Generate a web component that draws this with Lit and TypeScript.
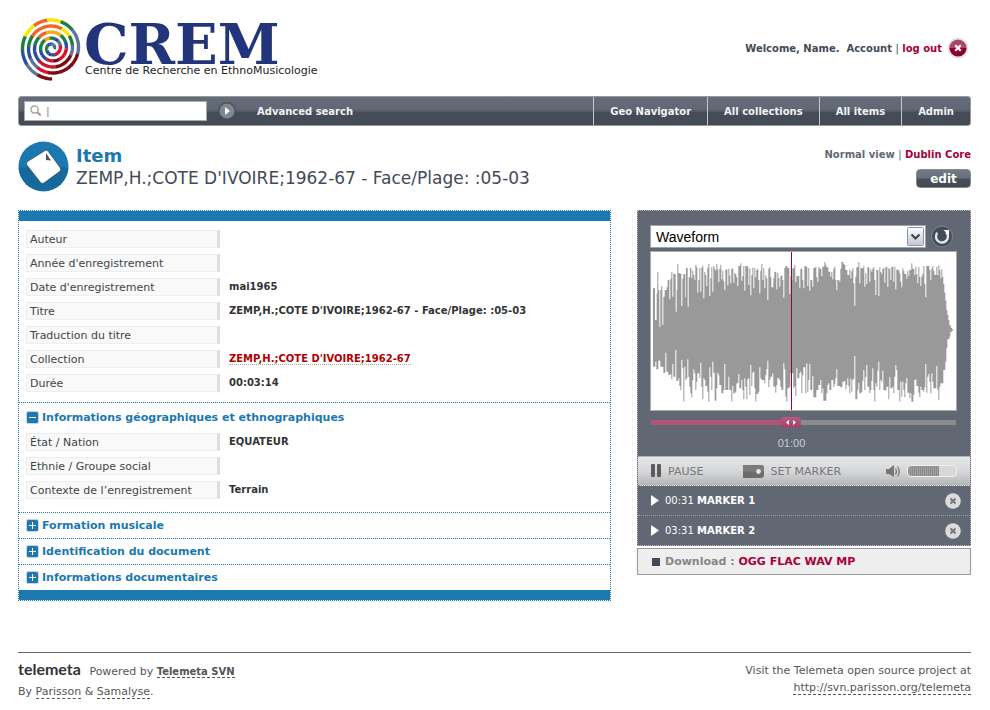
import { LitElement, html, svg, css } from "lit";
import { customElement, property, state } from "lit/decorators.js";

/* Upper and lower outlines of the sound: x, y pairs in thirds of a pixel. */
const UPPER = [
  69,265,75,360,80,280,82,216,85,270,88,380,91,270,94,258,97,375,100,290,104,270,110,262,113,240,118,297,121,236,124,216,127,290,130,222,137,335,140,270,142,192,145,220,152,222,154,318,157,236,160,222,166,292,168,204,173,320,176,232,180,204,184,235,187,212,190,225,193,240,196,195,199,202,202,278,205,240,208,204,211,275,214,204,217,198,220,295,223,216,226,225,229,258,232,204,235,192,238,288,241,235,244,200,247,275,250,198,253,206,256,212,259,192,262,208,265,246,268,206,271,194,274,238,277,212,280,244,283,270,286,210,289,208,292,256,295,206,298,226,301,250,304,206,307,206,310,248,313,220,316,222,319,232,322,258,325,198,331,190,334,242,337,228,340,198,343,272,346,198,352,200,355,255,358,205,361,286,364,226,367,203,370,265,373,204,376,232,379,210,382,206,385,240,388,280,391,212,394,192,397,240,400,205,403,265,406,226,409,235,412,300,415,206,418,202,421,232,424,262,430,235,433,216,439,268,442,218,445,234,448,260,451,228,454,226,457,240,460,293,463,204,466,198,472,204,478,282,481,228,484,240,487,205,493,195,496,246,499,228,502,228,508,265,511,208,514,205,517,240,520,265,523,198,529,202,532,258,535,204,538,272,541,240,547,260,550,204,556,200,559,232,562,245,565,200,568,206,574,228,577,200,583,186,586,194,589,202,595,215,601,230,604,215,607,238,610,206,613,200,616,240,619,270,622,240,628,245,631,206,634,186,640,192,643,195,646,210,652,225,658,208,661,235,664,214,667,205,670,250,673,318,676,230,679,202,685,186,688,250,691,204,694,205,700,198,703,260,706,220,709,252,712,202,718,245,721,208,724,215,727,206,730,202,733,240,736,285,739,210,745,288,748,202,751,216,754,222,757,206,760,204,763,248,766,202,769,200,772,260,775,204,778,208,781,240,784,200,790,245,793,200,796,268,799,208,802,210,808,220,811,245,814,262,817,205,820,212,823,222,829,236,832,212,835,228,838,210,844,190,847,206,853,225,856,200,859,222,862,250,865,200,868,230,871,258,874,230,877,222,880,198,883,252,886,292,889,198,898,210,901,240,904,206,907,198,910,212,913,225,919,200,922,226,925,196,928,210,931,235,934,208,937,230,940,252,943,278,946,302,949,330,952,345,955,360,958,375,962,383,966,388,
];
const LOWER = [
  69,170,76,155,79,178,85,152,91,170,100,188,106,128,109,185,115,195,121,192,124,208,127,162,130,200,136,120,139,212,145,205,148,228,151,240,154,150,157,175,160,275,163,170,166,210,169,205,172,148,175,200,178,230,181,250,184,262,187,210,190,178,193,190,196,240,199,215,202,190,208,204,211,158,214,230,217,268,220,205,223,210,226,228,232,245,235,275,238,172,241,200,244,240,247,155,250,188,254,272,259,235,262,188,265,196,268,225,274,250,280,240,283,162,286,240,292,240,295,200,298,240,304,275,307,228,310,250,316,245,319,220,325,192,328,235,334,210,337,240,340,268,343,205,346,230,349,268,352,208,355,205,358,255,361,165,364,228,367,188,370,185,373,235,376,275,379,252,385,245,388,172,391,205,394,210,403,220,406,195,409,178,412,152,415,232,418,210,421,200,427,190,430,230,436,248,439,225,442,205,448,210,451,230,454,240,460,160,463,178,466,260,469,275,472,235,478,230,481,190,484,190,490,235,493,228,496,258,499,175,502,205,505,205,508,190,511,185,514,250,517,196,520,172,526,250,529,160,532,245,535,210,538,162,541,240,547,198,550,262,556,262,559,240,565,225,571,210,574,250,577,235,580,272,586,272,589,250,592,225,595,220,598,240,604,210,607,210,610,232,613,222,616,205,619,178,622,228,631,232,637,215,643,212,646,238,649,225,652,205,655,228,658,250,661,206,664,245,667,210,670,206,673,138,676,268,682,240,685,218,688,250,694,245,697,212,700,180,703,240,706,200,709,165,712,230,718,250,721,240,724,212,727,175,730,240,733,275,736,220,739,230,742,182,745,155,748,240,751,210,754,215,757,182,760,240,766,242,769,230,775,268,778,202,781,235,787,230,790,250,793,200,796,165,799,180,802,240,808,275,811,215,814,260,817,215,820,240,823,262,826,220,829,205,832,248,838,265,841,250,844,275,850,255,853,210,856,208,859,228,865,248,868,262,871,230,874,240,880,245,883,232,886,162,889,248,892,200,895,192,898,215,901,250,904,190,907,215,910,235,916,235,919,168,922,240,925,270,928,230,931,220,937,220,940,180,946,155,949,115,952,88,958,80,961,65,966,62,
];

function outline(): string {
  const step = (pairs: number[], dy: number) => {
    const out: string[] = [];
    for (let i = 0; i < pairs.length; i += 2) {
      const x = pairs[i] - 63;
      const next = i + 2 < pairs.length ? pairs[i + 2] - 63 : x + 3;
      out.push(`${x},${pairs[i + 1] + dy}`, `${next},${pairs[i + 1] + dy}`);
    }
    return out;
  };
  return [...step(UPPER, -156), ...step(LOWER, 174).reverse()].join(" ");
}

/* Colours met along the spiral, twelve to a turn, clockwise from six o'clock, outer turn first. */
const [R, D, S, B, G, Y, O, A] = ["#d0152c", "#7c0c14", "#5d749c", "#2a4f9c", "#1d7f3c", "#f6ea00", "#f0642a", "#f8a81c"];
const SPIRAL = [
  D, S, B, G, Y, O, Y, G, S, S, D, D, D,
  R, S, B, G, O, O, O, Y, G, S, D, D, R,
  R, B, B, G, O, A, A, G, B, R, R, D,
  R, B, B, G, G, A, G, B, S, R, R, R,
  B, B, B, G, G, B, B, S, S, B, B,
];

function spiral() {
  const turns = 4.8;
  const count = SPIRAL.length;
  const at = (t: number) => {
    const a = Math.PI / 2 + t * turns * 2 * Math.PI;
    const r = 31 - 29 * t;
    return `${(32 + r * Math.cos(a)).toFixed(2)},${(38 + r * Math.sin(a)).toFixed(2)}`;
  };
  return SPIRAL.map((colour, i) => {
    const pts: string[] = [];
    for (let k = 0; k <= 8; k++) pts.push(at((i + (k * 1.04) / 8) / count));
    return svg`<polyline points=${pts.join(" ")} fill="none" stroke=${colour} stroke-width="3.4"/>`;
  });
}

interface Field { label: string; value?: string; href?: string }

const GENERAL: Field[] = [
  { label: "Auteur" },
  { label: "Année d'enregistrement" },
  { label: "Date d'enregistrement", value: "mai1965" },
  { label: "Titre", value: "ZEMP,H.;COTE D'IVOIRE;1962-67 - Face/Plage: :05-03" },
  { label: "Traduction du titre" },
  { label: "Collection", value: "ZEMP,H.;COTE D'IVOIRE;1962-67", href: "#collection" },
  { label: "Durée", value: "00:03:14" },
];

const SECTIONS: { title: string; fields: Field[] }[] = [
  {
    title: "Informations géographiques et ethnographiques",
    fields: [
      { label: "État / Nation", value: "EQUATEUR" },
      { label: "Ethnie / Groupe social" },
      { label: "Contexte de l’enregistrement", value: "Terrain" },
    ],
  },
  { title: "Formation musicale", fields: [] },
  { title: "Identification du document", fields: [] },
  { title: "Informations documentaires", fields: [] },
];

const reset = css`
  * { box-sizing: border-box; margin: 0; padding: 0; }
  :host { display: block; }
  svg { display: block; flex: none; }
  a { text-decoration: none; color: inherit; }
  button { font: inherit; color: inherit; background: none; border: 0; cursor: pointer; }
`;

@customElement("site-header")
class SiteHeader extends LitElement {
  static styles = [reset, css`
    .top { display: flex; justify-content: space-between; align-items: flex-start; height: 86px; }
    .logo { display: block; margin-left: 2px; }
    .name { font: bold 56px "DejaVu Serif", serif; fill: #22357a; }
    .motto { font: 11px "DejaVu Sans", sans-serif; fill: #222; }
    .account { display: flex; align-items: center; font-weight: bold; margin-top: 27px; }
    .account p { white-space: pre; }
    .bar { font-weight: normal; }
    .accent { color: #a8003b; }
    .close { margin: 0 2px 0 5px; }
    nav {
      display: flex; align-items: center; height: 30px; color: #f2f2f2; font-weight: bold;
      border: 1px solid #999; border-radius: 3px;
      background: linear-gradient(#656c79, #616773 48%, #545b67 48%, #545b67 52%, #464c58 52%, #434955);
    }
    form { display: flex; align-items: center; }
    .box {
      display: flex; align-items: center; width: 183px; height: 20px; margin-left: 5px; padding-left: 5px;
      background: #fff; border: 1px solid #aaa;
    }
    .box input { flex: 1; min-width: 0; margin-left: 4px; border: 0; outline: 0; background: none; font: inherit; color: #999; }
    .go { margin: 0 21px 0 11px; }
    .links { display: flex; margin-left: auto; list-style: none; align-self: stretch; }
    .links a { display: flex; align-items: center; height: 28px; padding: 0 16px; border-left: 1px solid #c8c8c8; }
  `];

  render() {
    return html`
      <header>
        <div class="top">
          <a class="logo" href="#home">
            <svg width="320" height="76" viewBox="0 0 320 76" role="img" aria-label="CREM">
              ${spiral()}
              <text class="name" x="64" y="54">CREM</text>
              <text class="motto" x="65" y="64">Centre de Recherche en EthnoMusicologie</text>
            </svg>
          </a>
          <div class="account">
            <p>Welcome, Name.  <a href="#account">Account</a> <span class="bar">|</span> <a class="accent" href="#logout">log out</a></p>
            <svg class="close" width="22" height="22" viewBox="0 0 22 22">
              <defs><linearGradient id="r" x2="0" y2="1"><stop offset=".5" stop-color="#ad4565"/><stop offset=".5" stop-color="#8c0030"/></linearGradient></defs>
              <circle cx="11" cy="11" r="10.5" fill="#e4e4e4"/><circle cx="11" cy="11" r="8.6" fill="url(#r)"/>
              <path d="M8.2 8.2l5.6 5.6M13.8 8.2l-5.6 5.6" stroke="#fff" stroke-width="2.2"/>
            </svg>
          </div>
        </div>
        <nav>
          <form @submit=${(e: Event) => e.preventDefault()}>
            <label class="box">
              <svg width="12" height="12" viewBox="0 0 12 12" fill="none" stroke="#999"><circle cx="4.5" cy="4.5" r="3.6" stroke-width="1.2"/><path d="M7.2 7.2l3.6 3.4" stroke-width="2"/></svg>
              <input type="text" aria-label="Search" value="|">
            </label>
            <button class="go" aria-label="Search">
              <svg width="18" height="18" viewBox="0 0 18 18"><circle cx="9" cy="9" r="8.2" fill="#7f898d" stroke="#4a505b" stroke-width="1.5"/><path d="M7 5l5 4-5 4z" fill="#fff"/></svg>
            </button>
          </form>
          <a href="#advanced">Advanced search</a>
          <ul class="links">
            <li><a href="#geo">Geo Navigator</a></li>
            <li><a href="#collections">All collections</a></li>
            <li><a href="#items">All items</a></li>
            <li><a href="#admin">Admin</a></li>
          </ul>
        </nav>
      </header>`;
  }
}

@customElement("item-details")
class ItemDetails extends LitElement {
  @state() private open = new Set([0]);

  static styles = [reset, css`
    .panel { border: 1px dotted #1b78b1; }
    .band { height: 10px; background: #1b78b1; }
    .first { padding: 8px 7px 10px; }
    .fields { display: grid; gap: 5px; }
    .row { display: grid; grid-template-columns: 194px 1fr; column-gap: 9px; align-items: center; height: 19px; }
    dt {
      height: 18px; padding-left: 3px; font-size: 11px; line-height: 17px; color: #444; background: #f9f9f9;
      border: 1px solid #eee; border-right: 3px solid #ddd; white-space: nowrap;
    }
    dd { font-weight: bold; color: #333; line-height: 16px; }
    dd a { color: #b00000; border-bottom: 1px dotted #aaa; }
    section { border-top: 1px dotted #1b78b1; padding: 0 7px; }
    .expanded { padding-bottom: 13px; }
    h4 { font-size: 11px; }
    h4 button { display: flex; align-items: center; gap: 3px; height: 25px; font-weight: bold; color: #1b78b1; }
    .expanded h4 button { height: 29px; }
  `];

  private toggle(i: number) {
    const next = new Set(this.open);
    next.has(i) ? next.delete(i) : next.add(i);
    this.open = next;
  }

  private fields(list: Field[]) {
    return html`<dl class="fields">${list.map((f) => html`
      <div class="row">
        <dt>${f.label}</dt>
        <dd>${f.href ? html`<a href=${f.href}>${f.value}</a>` : f.value}</dd>
      </div>`)}</dl>`;
  }

  render() {
    return html`
      <div class="panel">
        <div class="band"></div>
        <div class="first">${this.fields(GENERAL)}</div>
        ${SECTIONS.map((s, i) => {
          const open = this.open.has(i);
          return html`
            <section class=${open ? "expanded" : ""}>
              <h4><button aria-expanded=${open} @click=${() => this.toggle(i)}>
                <svg width="13" height="13" viewBox="0 0 13 13">
                  <rect width="13" height="13" rx="2" fill="#c9d3da"/><rect x="1" y="1" width="11" height="11" rx="1.5" fill="#1b78b1"/>
                  <path d=${open ? "M3 6.5h7" : "M3 6.5h7M6.5 3v7"} stroke="#fff"/>
                </svg>
                ${s.title}
              </button></h4>
              ${open ? this.fields(s.fields) : ""}
            </section>`;
        })}
        <div class="band"></div>
      </div>`;
  }
}

@customElement("item-player")
class ItemPlayer extends LitElement {
  @property({ type: Number }) position = 456;

  static styles = [reset, css`
    .player { border: 1px dotted #b5b8c0; background: #616874; color: #fff; }
    .view { padding: 14px 13px 0 12px; }
    .pick { display: flex; align-items: center; gap: 4px; padding-right: 3px; }
    .select { position: relative; flex: 1; }
    select {
      display: block; width: 100%; height: 23px; padding-left: 5px; appearance: none; border: 1px solid #9aa5ad; border-radius: 0;
      background: #fff; color: #000; font: 14px "Liberation Sans", sans-serif;
    }
    .drop { position: absolute; right: 2px; top: 2px; pointer-events: none; }
    .wave { margin-top: 3px; height: 160px; border: 1px solid #aaa; background: #fff; }
    .wave svg { width: 100%; height: 100%; }
    input[type="range"] { display: block; appearance: none; outline: 0; }
    .seek { width: calc(100% - 2px); height: 11px; margin: 6px 1px 0; background: none; }
    .seek::-webkit-slider-runnable-track {
      height: 5px; background: linear-gradient(90deg, #b25378 var(--done), #8b8b8b var(--done));
    }
    .seek::-webkit-slider-thumb {
      appearance: none; width: 20px; height: 11px; margin-top: -3px; border-radius: 2px;
      background: url("data:image/svg+xml,%3Csvg xmlns='http://www.w3.org/2000/svg' viewBox='0 0 20 11'%3E%3Cpath d='M8 3v5L5 5.500zM12 3v5l3-2.500z' fill='white'/%3E%3C/svg%3E") center no-repeat, linear-gradient(#b85a80, #9c4468);
    }
    .time {
      height: 28px; padding-right: 24px; text-align: center; color: #c9cdd6;
      font: 11px "Liberation Sans", sans-serif; line-height: 30px;
    }
    .controls {
      display: flex; align-items: center; height: 30px; padding: 0 13px; color: #777; font-size: 11px;
      border-top: 1px dotted #aaa; border-bottom: 1px dotted #999; background: linear-gradient(#e6e7e9, #d6d7d9 50%, #b6b7b9);
    }
    .controls button { display: flex; align-items: center; gap: 6px; }
    .mark { margin-left: 40px; }
    .volume { display: flex; align-items: center; gap: 5px; margin-left: auto; }
    .volume input {
      width: 50px; height: 12px; border: 1px solid #f0f0f0; border-radius: 4px;
      background: linear-gradient(90deg, transparent 65%, #d8d8d8 65%), repeating-linear-gradient(90deg, #8b8b8b 0 1px, #a0a0a0 1px 2px);
    }
    .volume input::-webkit-slider-thumb { appearance: none; width: 1px; height: 8px; background: none; }
    ul { list-style: none; }
    li { display: flex; align-items: center; height: 29px; padding: 0 9px 0 13px; }
    li + li { height: 30px; border-top: 1px dotted #9ba0aa; }
    .cue { display: flex; align-items: center; gap: 6px; }
    .remove { margin-left: auto; }
    .download {
      display: flex; align-items: center; gap: 5px; height: 27px; margin-top: 2px; padding-left: 14px;
      border: 1px solid #999; background: #eee; color: #85868a; font-size: 11px; font-weight: bold;
    }
    .download a { color: #a8003b; }
    .square { width: 8px; height: 8px; background: #434a57; }
  `];

  private marker(time: string, name: string) {
    return html`
      <li>
        <button class="cue">
          <svg width="8" height="11" viewBox="0 0 8 11"><path d="M0 0l8 5.500L0 11z" fill="#fff"/></svg>
          <span>${time} <b>${name}</b></span>
        </button>
        <button class="remove" aria-label="Remove ${name}">
          <svg width="16" height="16" viewBox="0 0 16 16"><circle cx="8" cy="8" r="7.800" fill="#dcdcdc"/><path d="M5.500 5.500l5 5M10.500 5.500l-5 5" stroke="#777" stroke-width="2"/></svg>
        </button>
      </li>`;
  }

  render() {
    return html`
      <div class="player">
        <div class="view">
          <div class="pick">
            <div class="select">
              <select aria-label="View"><option>Waveform</option><option>Spectrogram</option></select>
              <svg class="drop" width="17" height="19" viewBox="0 0 17 19">
                <defs><linearGradient id="d" x2="0" y2="1"><stop stop-color="#fdfdfe"/><stop offset="1" stop-color="#c3c5d3"/></linearGradient></defs>
                <rect x=".5" y=".5" width="16" height="18" rx="1" fill="url(#d)" stroke="#8d95a8"/><path d="M4.500 7.500l4 4 4-4" fill="none" stroke="#3b3f4a" stroke-width="2"/>
              </svg>
            </div>
            <button aria-label="Reload">
              <svg width="24" height="23" viewBox="0 0 24 23"><circle cx="12" cy="11.500" r="10.500" fill="#454c59" stroke="#808690"/><path d="M7.300 7.800A6 6 0 1 0 16.200 7.300" fill="none" stroke="#e6e6e6" stroke-width="2.400"/><path d="M13.500 5h5.500v5.500z" fill="#fff"/></svg>
            </button>
          </div>
          <div class="wave">
            <svg viewBox="0 0 915 474" preserveAspectRatio="none">
              <polygon points=${outline()} fill="#999"/>
              <rect x="420" width="3" height="474" fill="#a0003c"/>
            </svg>
          </div>
          <input class="seek" type="range" min="0" max="1000" aria-label="Position" .value=${String(this.position)}
            style="--done: ${this.position / 10}%"
            @input=${(e: Event) => (this.position = Number((e.target as HTMLInputElement).value))}>
          <div class="time">01:00</div>
        </div>
        <div class="controls">
          <button><svg width="11" height="14" viewBox="0 0 11 14" fill="#5c5c5c"><rect width="4" height="13" rx="1"/><rect x="6" width="4" height="13" rx="1"/></svg>PAUSE</button>
          <button class="mark"><svg width="21" height="13" viewBox="0 0 21 13"><path d="M0 0h18q3 0 3 3v7q0 3-3 3H0z" fill="#6c6c6c"/><path d="M0 0h18q3 0 3 3v3.500H0z" fill="#7c7c7c"/><circle cx="15.500" cy="6.500" r="2.400" fill="#e8e8e8"/></svg>SET MARKER</button>
          <label class="volume">
            <svg width="16" height="13" viewBox="0 0 16 13"><path d="M0 4h3l5-4v12L3 9H0z" fill="#777"/><path d="M9.500 3.500q2 3 0 6M11.500 1.500q3.500 5 0 10" fill="none" stroke="#777" stroke-width="1.200"/></svg>
            <input type="range" aria-label="Volume" value="65">
          </label>
        </div>
        <ul>${this.marker("00:31", "MARKER 1")}${this.marker("03:31", "MARKER 2")}</ul>
      </div>
      <div class="download"><span class="square"></span>
        <span>Download : <a href="#ogg">OGG</a> <a href="#flac">FLAC</a> <a href="#wav">WAV</a> <a href="#mp">MP</a></span>
      </div>`;
  }
}

@customElement("app-root")
class AppRoot extends LitElement {
  static styles = [reset, css`
    :host { padding: 10px 19px 8px 18px; background: #fff; color: #434a57; font: 10px "DejaVu Sans", sans-serif; }
    .title { display: flex; align-items: flex-start; gap: 7px; margin-top: 15px; }
    h1 { font-size: 18px; line-height: 22px; color: #1b78b1; margin-top: 4px; }
    h2 { font-size: 17px; line-height: 22px; font-weight: normal; }
    .views { display: flex; flex-direction: column; align-items: flex-end; gap: 8px; margin: 7px 0 0 auto; font-weight: bold; color: #616874; }
    .views p { line-height: 13px; }
    .bar { font-weight: normal; }
    .accent { color: #a8003b; }
    .edit {
      width: 55px; height: 19px; border: 1px solid #888; border-radius: 4px; color: #fff; font-weight: bold; font-size: 12px; line-height: 16px;
      background: linear-gradient(#737985, #686e7a 48%, #474d59 52%, #434955);
    }
    main { display: grid; grid-template-columns: 1fr 334px; gap: 26px; align-items: start; margin-top: 18px; }
    footer {
      display: flex; justify-content: space-between; margin-top: 51px; padding-top: 9px; border-top: 1px solid #616874;
      color: #555; font-size: 11px; line-height: 20px;
    }
    footer a { border-bottom: 1px dashed #555; line-height: 12px; }
    .brand { font: bold 16px Lato, sans-serif; line-height: 12px; color: #333; margin-right: 5px; }
    .right { text-align: right; line-height: 17px; }
    .svn { font-size: 10px; font-weight: bold; }
  `];

  render() {
    return html`
      <site-header></site-header>
      <div class="title">
        <svg width="51" height="51" viewBox="0 0 51 51">
          <circle cx="25.500" cy="25.500" r="25" fill="#1b78b1"/><path d="M.6 27Q25 22 50.400 27A25 25 0 0 1 .6 27z" fill="#17689b"/>
          <path d="M9.500 20.500L27 9.500q2-1 3.200.8L42.500 27q1 2-.8 3.500L26 42q-2 1-3.500-.5L8.800 24q-1-2 .7-3.500z" fill="#fff" stroke="#2d4c5f" stroke-width=".8"/>
          <path d="M28 12v7l5 .5z" fill="#4a5560"/>
        </svg>
        <div><h1>Item</h1><h2>ZEMP,H.;COTE D'IVOIRE;1962-67 - Face/Plage: :05-03</h2></div>
        <div class="views">
          <p><a href="#normal">Normal view</a> <span class="bar">|</span> <a class="accent" href="#dc">Dublin Core</a></p>
          <button class="edit">edit</button>
        </div>
      </div>
      <main><item-details></item-details><item-player></item-player></main>
      <footer>
        <div>
          <p><span class="brand">telemeta</span> Powered by <a class="svn" href="#svn">Telemeta SVN</a></p>
          <p>By <a href="#parisson">Parisson</a> &amp; <a href="#samalyse">Samalyse</a>.</p>
        </div>
        <div class="right">
          <p>Visit the Telemeta open source project at</p>
          <p><a href="http://svn.parisson.org/telemeta">http://svn.parisson.org/telemeta</a></p>
        </div>
      </footer>`;
  }
}
